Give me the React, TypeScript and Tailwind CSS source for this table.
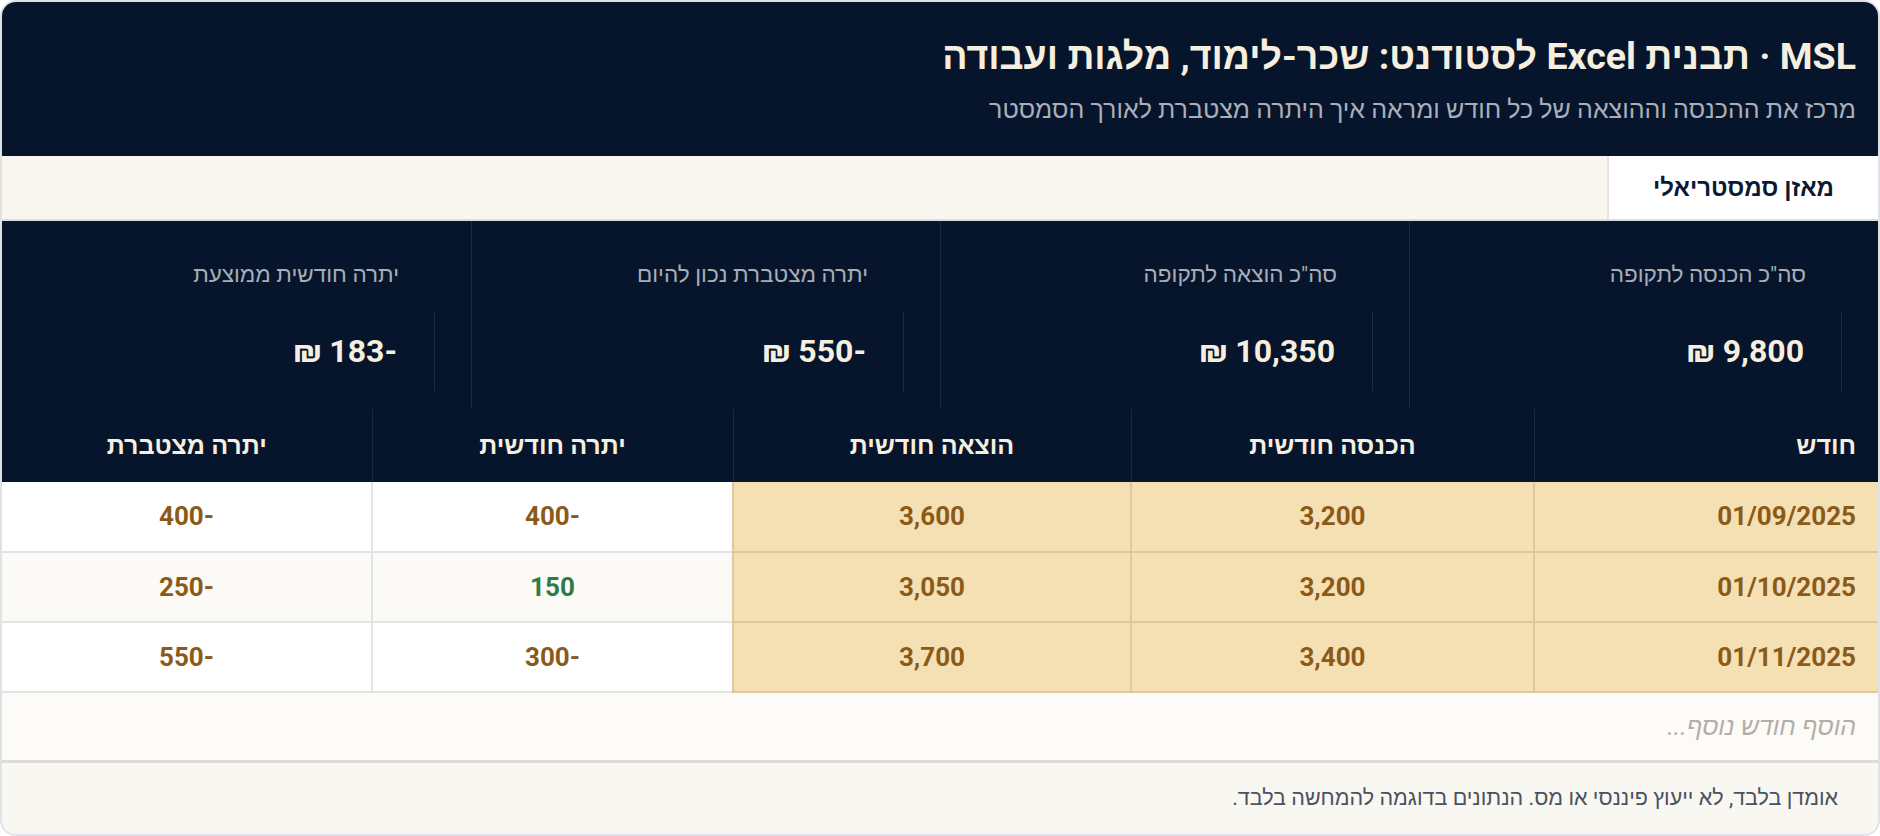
import React from 'react';

type Row = {
  month: string;
  income: string;
  expense: string;
  balance: string;
  cumulative: string;
};

const rows: Row[] = [
  { month: '01/09/2025', income: '3,200', expense: '3,600', balance: '-400', cumulative: '-400' },
  { month: '01/10/2025', income: '3,200', expense: '3,050', balance: '150', cumulative: '-250' },
  { month: '01/11/2025', income: '3,400', expense: '3,700', balance: '-300', cumulative: '-550' },
];

const stats = [
  { label: 'סה"כ הכנסה לתקופה', value: '9,800 ₪' },
  { label: 'סה"כ הוצאה לתקופה', value: '10,350 ₪' },
  { label: 'יתרה מצטברת נכון להיום', value: '-550 ₪' },
  { label: 'יתרה חודשית ממוצעת', value: '-183 ₪' },
];

const headers = ['חודש', 'הכנסה חודשית', 'הוצאה חודשית', 'יתרה חודשית', 'יתרה מצטברת'];

export default function App() {
  return (
    <div className="w-[1880px] h-[836px] bg-white" style={{ fontFamily: 'Roboto, sans-serif' }}>
      <div
        dir="rtl"
        className="h-full rounded-[16px] border-2 border-[#e1e2e6] overflow-hidden flex flex-col bg-[#f9f7f1]"
      >
        {/* header */}
        <div className="h-[154px] shrink-0 bg-[#06152c] px-[22px] flex flex-col justify-center gap-[17px]">
          <h1 className="text-[37.5px] leading-[44px] font-bold text-[#f6efdf]">
            MSL · תבנית Excel לסטודנט: שכר-לימוד, מלגות ועבודה
          </h1>
          <p className="text-[25px] leading-[30px] text-[#a9aeb8]">
            מרכז את ההכנסה וההוצאה של כל חודש ומראה איך היתרה מצטברת לאורך הסמסטר
          </p>
        </div>

        {/* tabs */}
        <div className="h-[65px] shrink-0 bg-[#f9f6ef] border-b-2 border-[#dcdce0] flex">
          <div className="h-full bg-white border-l-2 border-[#e3e3e7] px-[44px] flex items-center text-[24px] font-bold text-[#0b1a33]">
            מאזן סמסטריאלי
          </div>
        </div>

        {/* summary */}
        <div className="h-[188px] shrink-0 bg-[#06152c] grid grid-cols-4">
          {stats.map((s, i) => (
            <div key={i} className={`pr-[36px] pt-[40px] ${i < 3 ? 'border-l border-[#1c2943]' : ''}`}>
              <div className="pr-[36px] text-[22.5px] leading-[26px] text-[#a9adb6]">{s.label}</div>
              <div className="mt-[24px] h-[80px] border-r border-[#1e2b45] pr-[37px] flex items-center text-[32px] font-bold text-[#f6efdf]">
                {s.value}
              </div>
            </div>
          ))}
        </div>

        {/* table */}
        <table className="w-full table-fixed border-collapse shrink-0">
          <colgroup>
            <col className="w-[344px]" />
            <col className="w-[403px]" />
            <col className="w-[398px]" />
            <col className="w-[361px]" />
            <col className="w-[370px]" />
          </colgroup>
          <thead>
            <tr className="h-[73px] bg-[#06152c]">
              {headers.map((h, i) => (
                <th
                  key={h}
                  className={`px-[22px] text-[25px] font-bold text-[#f6efdf] ${i === 0 ? 'text-right' : 'text-center'} ${i < 4 ? 'border-l border-[#1c2943]' : ''}`}
                >
                  {h}
                </th>
              ))}
            </tr>
          </thead>
          <tbody>
            {rows.map((r, ri) => {
              const plain = ri === 1 ? 'bg-[#fcfaf6]' : 'bg-white';
              return (
                <tr key={r.month} className="h-[70px] text-[26px] font-bold">
                  <td className="px-[22px] text-right bg-[#f5e0b3] text-[#8b5a18] border-b-2 border-l-2 border-[#dcc9a0]">
                    {r.month}
                  </td>
                  <td className="text-center bg-[#f5e0b3] text-[#8b5a18] border-b-2 border-l-2 border-[#dcc9a0]">
                    {r.income}
                  </td>
                  <td className="text-center bg-[#f5e0b3] text-[#8b5a18] border-b-2 border-l-2 border-[#dcc9a0]">
                    {r.expense}
                  </td>
                  <td className={`text-center ${plain} border-b-2 border-l-2 border-[#e3e3e3] ${r.balance.startsWith('-') ? 'text-[#8b5a18]' : 'text-[#2f7a45]'}`}>
                    {r.balance}
                  </td>
                  <td className={`text-center ${plain} text-[#8b5a18] border-b-2 border-[#e3e3e3]`}>
                    {r.cumulative}
                  </td>
                </tr>
              );
            })}
          </tbody>
        </table>

        {/* add row */}
        <div className="h-[67px] shrink-0 bg-[#fcfbf8] px-[22px] flex items-center text-[25px] italic text-[#b3afa7]">
          הוסף חודש נוסף...
        </div>

        {/* footer */}
        <div className="flex-1 border-t-[3px] border-[#dddcd8] bg-[#f9f7f1] px-[40px] flex items-center text-[21.5px] text-[#4a5161]">
          אומדן בלבד, לא ייעוץ פיננסי או מס. הנתונים בדוגמה להמחשה בלבד.
        </div>
      </div>
    </div>
  );
}
